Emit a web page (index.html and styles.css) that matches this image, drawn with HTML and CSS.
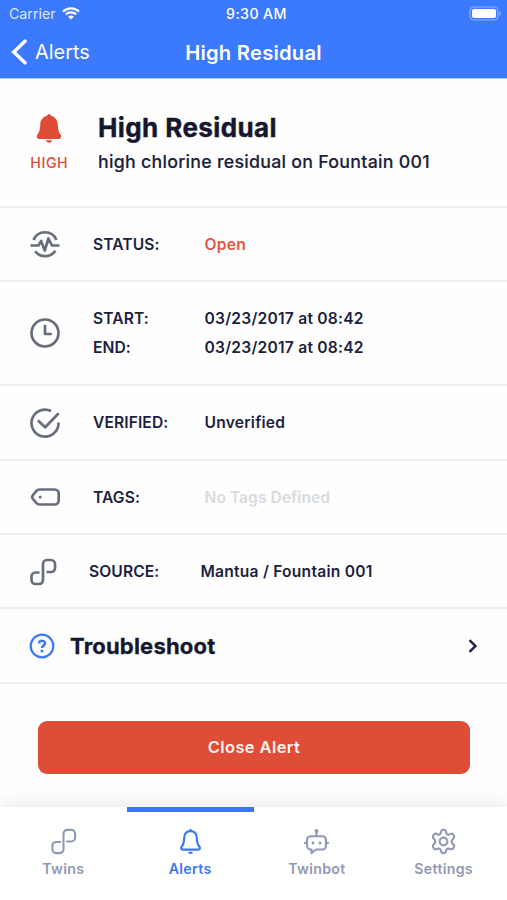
FILE: index.html
```html
<!DOCTYPE html>
<html lang="en">
<head>
<meta charset="utf-8">
<title>High Residual</title>
<link rel="stylesheet" href="styles.css">
</head>
<body>
<div class="app">
  <header class="header">
    <div class="status-bar">
      <div class="carrier"><span>Carrier</span>
        <svg width="18" height="13" viewBox="0 0 18 13" fill="none" stroke="#fff" stroke-width="2.3"><path d="M1 4.6a11.5 11.5 0 0 1 16 0M3.8 7.5a7.4 7.4 0 0 1 10.4 0"/><path d="M9 12.6 6.1 9.8a4.2 4.2 0 0 1 5.8 0z" fill="#fff" stroke="none"/></svg>
      </div>
      <div class="time">9:30 AM</div>
      <svg class="battery" width="33" height="15" viewBox="0 0 33 15"><rect x="1" y="1" width="28" height="13" rx="4" fill="none" stroke="#8db1ff" stroke-width="1.2"/><rect x="3" y="3" width="24" height="9" rx="2" fill="#fff"/><path d="M30.5 5.5c2 .8 2 3.2 0 4z" fill="#8db1ff"/></svg>
    </div>
    <nav class="title-bar">
      <a class="back"><svg width="16" height="26" viewBox="0 0 16 26" fill="none" stroke="#fff" stroke-width="3.5" stroke-linecap="round"><path d="M14 2.200 2.800 13 14 23.800"/></svg><span>Alerts</span></a>
      <h1>High Residual</h1>
      <span></span>
    </nav>
  </header>

  <main>
    <section class="summary">
      <div class="severity">
        <svg width="26" height="29" viewBox="0 0 26 29" fill="#df4b36"><path d="M13 0c1.1 0 1.8.7 1.9 1.8 4 .9 6.6 4.1 6.8 8.200.2 5.300.8 8.300 2.700 10.200 1.500 1.600.8 4.800-1.900 4.800h-19C.8 25 .1 21.800 1.600 20.200c1.900-1.900 2.500-4.900 2.700-10.200.2-4.100 2.800-7.300 6.800-8.200C11.200.7 11.900 0 13 0z"/><path d="M10 26.200h6c-.3 1.500-1.400 2.500-3 2.500s-2.700-1-3-2.500z"/></svg>
        <span>HIGH</span>
      </div>
      <div class="summary-text"><h2>High Residual</h2><p>high chlorine residual on Fountain 001</p></div>
    </section>

    <section class="row status">
      <svg class="icon" width="32" height="32" viewBox="0 0 32 32"><path d="M4.500 11a12.400 12.400 0 0 1 23 0M6.200 22.300a12.400 12.400 0 0 0 20.200-.6M1.500 16.500h8l2.600-4.500 3.700 9.500 3.600-12 3.500 7h7.600"/></svg>
      <dl><dt>STATUS:</dt><dd class="open">Open</dd></dl>
    </section>
    <section class="row dates">
      <svg class="icon" width="32" height="32" viewBox="0 0 32 32"><circle cx="16" cy="16" r="13.500"/><path d="M16 7.700V17h6.800"/></svg>
      <dl><dt>START:</dt><dd>03/23/2017 at 08:42</dd><dt>END:</dt><dd>03/23/2017 at 08:42</dd></dl>
    </section>
    <section class="row verified">
      <svg class="icon" width="32" height="32" viewBox="0 0 32 32"><path d="M22 4A13.500 13.500 0 1 0 29.500 15.500M9 13.500l7.200 6.800L29.700 6.200"/></svg>
      <dl><dt>VERIFIED:</dt><dd>Unverified</dd></dl>
    </section>
    <section class="row">
      <svg class="icon" width="32" height="32" viewBox="0 0 32 32"><path d="M10.500 8.500h15.200a4 4 0 0 1 4 4v7a4 4 0 0 1-4 4H10.500a4 4 0 0 1-3-1.300L4 18c-1.100-1.300-1.100-2.700 0-4l3.500-4.200a4 4 0 0 1 3-1.300z"/><circle cx="11.200" cy="16" r="1.500" fill="#686d7b" stroke="none"/></svg>
      <dl><dt>TAGS:</dt><dd class="empty">No Tags Defined</dd></dl>
    </section>
    <section class="row source">
      <svg class="icon" width="28" height="28" viewBox="0 0 28 28"><path d="M10.500 14.500H6.500a4 4 0 0 0-4 4V22a4 4 0 0 0 4 4H10a4 4 0 0 0 4-4V6a4 4 0 0 1 4-4h4a4 4 0 0 1 4 4v4a4 4 0 0 1-4 4h-4.500"/></svg>
      <dl><dt>SOURCE:</dt><dd>Mantua / Fountain 001</dd></dl>
    </section>
    <section class="trouble">
      <svg width="26" height="26" viewBox="0 0 26 26" fill="none" stroke="#3a78f5" stroke-width="2.200"><circle cx="13" cy="13" r="11.300"/><path d="M10.100 10.300c.2-3.300 6.100-3.200 5.900.1-.1 2.100-3 2.300-3 4.700" stroke-width="2.500"/><circle cx="13" cy="17.900" r="1.500" fill="#3a78f5" stroke="none"/></svg>
      <h3>Troubleshoot</h3>
      <svg width="10" height="14" viewBox="0 0 10 14" fill="none" stroke="#25264b" stroke-width="2.500"><path d="M1.500 1.200 7.500 7l-6 5.800"/></svg>
    </section>
    <div class="action"><button>Close Alert</button></div>
  </main>

  <nav class="tabs">
    <a class="tab"><svg width="27" height="27" viewBox="0 0 28 28"><path d="M10.500 14.500H6.500a4 4 0 0 0-4 4V22a4 4 0 0 0 4 4H10a4 4 0 0 0 4-4V6a4 4 0 0 1 4-4h4a4 4 0 0 1 4 4v4a4 4 0 0 1-4 4h-4.500"/></svg><span>Twins</span></a>
    <a class="tab active"><svg width="25" height="27" viewBox="0 0 26 28"><path d="M13 3.200c3.900 0 6.300 2.800 6.500 6.800.2 5.400.8 7.300 2.800 9.400 1.100 1.200.4 3-1.200 3H4.900c-1.600 0-2.300-1.800-1.200-3 2-2.100 2.600-4 2.800-9.400.2-4 2.600-6.800 6.500-6.800zM13 1.800v1.500M11.800 25.700h2.400"/></svg><span>Alerts</span></a>
    <a class="tab"><svg width="27" height="27" viewBox="0 0 28 28"><path d="M8 8.500h12a3.800 3.800 0 0 1 3.800 3.800v6.200a3.800 3.800 0 0 1-3.800 3.800h-6.500L8.800 26v-3.700H8a3.800 3.800 0 0 1-3.800-3.800v-6.200A3.800 3.800 0 0 1 8 8.500zM14 3v5M1.900 15.400h2M24.100 15.400h2"/><g fill="#929ab3" stroke="none"><circle cx="14" cy="3" r="2"/><circle cx="10.300" cy="15.500" r="1.500"/><circle cx="17.700" cy="15.500" r="1.500"/></g></svg><span>Twinbot</span></a>
    <a class="tab"><svg width="27" height="27" viewBox="0 0 28 28"><path d="M11.600 3.300Q12 1.800 13.500 1.800h1q1.500 0 1.900 1.500l.6 2.300q.5 1.600 2.200 1.300l2.800-.9q1.400-.4 2.100.9l.8 1.500q.6 1.200-.4 2.300L23 12.400q-1 1.600 0 3.200l1.500 1.700q1 1.100.4 2.300l-.8 1.500q-.7 1.300-2.100.9l-2.800-.7q-1.700-.1-2.200 1.200l-.6 2.200q-.4 1.500-1.900 1.500h-1q-1.500 0-1.900-1.500L11 22.500q-.5-1.300-2.200-1.200L6 22q-1.400.4-2.100-.9l-.8-1.500q-.6-1.200.4-2.300L5 15.600q1-1.600 0-3.200l-1.500-1.700q-1-1.100-.4-2.300l.8-1.500Q4.600 5.600 6 6l2.800.9q1.700.3 2.200-1.300z"/><circle cx="14" cy="14" r="4"/></svg><span>Settings</span></a>
  </nav>
</div>
</body>
</html>
```

FILE: styles.css
```css
* { box-sizing: border-box; margin: 0; padding: 0; }
body { background: #fefefe; color: #1c1f3d; font-family: Inter, "Liberation Sans", sans-serif; }
.app { width: 507px; height: 900px; display: flex; flex-direction: column; overflow: hidden; }
svg { display: block; flex: none; }

.header { height: 79px; background: #3b79fe; color: #fff; border-bottom: 1px solid #a9c7fb; }
.status-bar { height: 27px; padding: 0 5px 0 9px; display: grid; grid-template-columns: 1fr auto 1fr; align-items: center; font-size: 14.2px; }
.carrier { display: flex; align-items: center; gap: 6px; color: #dce7ff; }
.time { margin-left: 2px; font-weight: 500; letter-spacing: .4px; }
.battery { justify-self: end; margin-top: -1px; }
.title-bar { height: 50px; padding: 0 11px; display: grid; grid-template-columns: 1fr auto 1fr; align-items: center; }
.back { display: flex; align-items: center; gap: 8px; font-size: 19.9px; }
h1 { font-size: 20.2px; font-weight: 600; letter-spacing: .25px; }

main { flex: 1; display: flex; flex-direction: column; }
.summary { height: 129px; padding: 0 0 1px 28px; display: flex; align-items: center; border-bottom: 2px solid #efeff1; }
.severity { width: 42px; margin-right: 28px; display: flex; flex-direction: column; align-items: center; gap: 11px; color: #df4b36; font-size: 14.2px; font-weight: 500; line-height: 17px; letter-spacing: .6px; }
.severity span { margin-right: -.6px; }
h2, h3 { color: #15172f; }
h2 { font-size: 26px; line-height: 32px; font-weight: 700; letter-spacing: .4px; -webkit-text-stroke: .4px; }
.summary-text p { margin-top: 7px; font-size: 17.8px; line-height: 22px; font-weight: 500; letter-spacing: .26px; -webkit-text-stroke: .15px; white-space: nowrap; }

.row { height: 74px; padding-left: 29px; display: flex; align-items: center; border-bottom: 2px solid #efeff1; }
.row.dates { height: 104px; }
.row.verified { height: 75px; }
.row.status, .row.source { padding-top: 1px; }
.icon { fill: none; stroke: #686d7b; stroke-width: 2.7; stroke-linejoin: round; }
dl { margin: 1px 0 0 32px; display: grid; grid-template-columns: 111.5px auto; row-gap: 9px; font-size: 15.6px; line-height: 20px; font-weight: 600; letter-spacing: .1px; }
dd { letter-spacing: .23px; }
.row .open { color: #e3553f; }
.row .empty { color: #d9dadd; letter-spacing: .05px; }

.trouble { height: 75px; padding: 0 29px; display: flex; align-items: center; border-bottom: 2px solid #efeff1; }
h3 { flex: 1; margin-left: 15px; font-size: 22px; font-weight: 700; letter-spacing: .2px; -webkit-text-stroke: .3px; }
.action { padding: 37px 37px 0 38px; }
button { width: 100%; height: 53px; padding-bottom: 2px; border: 0; border-radius: 9px; background: #e04d37; color: #fff2ee; font: 600 16.5px Inter, sans-serif; letter-spacing: .4px; }

.tabs { height: 93px; display: flex; background: #fff; box-shadow: 0 -4px 18px rgba(0, 0, 0, .08); }
.tab { flex: 1; padding-top: 16px; display: flex; flex-direction: column; align-items: center; gap: 5px; border-top: 5px solid transparent; color: #929ab3; font-size: 14.2px; line-height: 17px; font-weight: 600; letter-spacing: .3px; }
.tab svg { fill: none; stroke: currentColor; stroke-width: 2.2; stroke-linejoin: round; stroke-linecap: round; }
.active { border-color: #3a78f5; color: #3a78f5; }
```
